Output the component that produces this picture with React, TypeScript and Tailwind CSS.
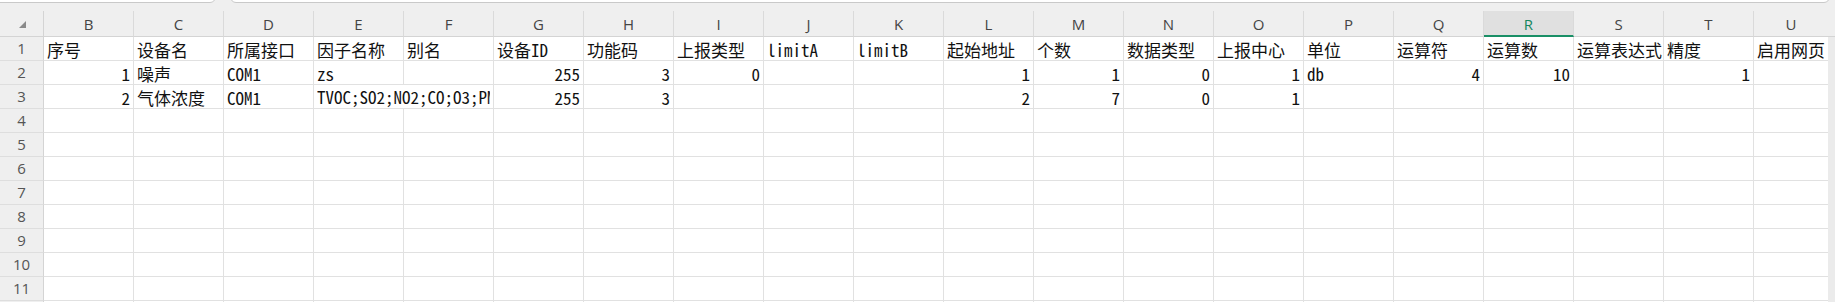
import React from "react";

type Val = string | number | null;

const COLS = ["B", "C", "D", "E", "F", "G", "H", "I", "J", "K", "L", "M", "N", "O", "P", "Q", "R", "S", "T", "U"];
const ACTIVE_COL = "R";

const ROWS: Val[][] = [
  ["序号", "设备名", "所属接口", "因子名称", "别名", "设备ID", "功能码", "上报类型", "limitA", "limitB", "起始地址", "个数", "数据类型", "上报中心", "单位", "运算符", "运算数", "运算表达式", "精度", "启用网页"],
  [1, "噪声", "COM1", "zs", null, 255, 3, 0, null, null, 1, 1, 0, 1, "db", 4, 10, null, 1, null],
  [2, "气体浓度", "COM1", "TVOC;SO2;NO2;CO;O3;PM2.5;PM10", null, 255, 3, null, null, null, 2, 7, 0, 1, null, null, null, null, null, null],
];

// cells whose text runs over the empty neighbour to the right: "row:col" -> span
const SPANS: Record<string, number> = { "2:3": 2 };

function Runs({ text }: { text: string }) {
  const parts = text.split(/([\x00-\x7f]+)/).filter((p) => p.length > 0);
  return (
    <>
      {parts.map((p, i) =>
        /^[\x00-\x7f]+$/.test(p) ? (
          <span key={i} className="font-['Noto_Sans_Mono_CJK_SC','Liberation_Mono',monospace]">
            {p}
          </span>
        ) : (
          <span key={i} className="font-['Noto_Sans_CJK_SC',sans-serif]">
            {p}
          </span>
        )
      )}
    </>
  );
}

function Cell({ v, span, last }: { v: Val; span: number; last: boolean }) {
  const width = last ? "w-[74px] border-r-0" : span === 2 ? "w-[180px] border-r" : "w-[90px] border-r";
  const align = typeof v === "number" ? "justify-end pr-[3px]" : "justify-start pl-[3px]";
  return (
    <div
      className={`${width} ${align} shrink-0 h-full flex items-center overflow-hidden whitespace-nowrap border-b border-[#e1e1e1] bg-white text-[17px] leading-[22px] text-[#111] pt-[2px]`}
    >
      {v === null ? null : span === 2 ? (
        <div className="w-[173px] overflow-hidden whitespace-nowrap">
          <Runs text={String(v)} />
        </div>
      ) : (
        <Runs text={String(v)} />
      )}
    </div>
  );
}

function RowHead({ n }: { n: number }) {
  return (
    <div className="w-[44px] shrink-0 h-full flex items-center justify-center border-r border-r-[#d4d4d4] border-b border-b-[#dedede] bg-[#efefef] text-[15px] text-[#555] font-['Open_Sans',sans-serif]">
      {n}
    </div>
  );
}

function DataRow({ n, cells }: { n: number; cells: Val[] }) {
  const out: React.ReactNode[] = [];
  for (let c = 0; c < COLS.length; c++) {
    const span = SPANS[`${n - 1}:${c}`] ?? 1;
    out.push(<Cell key={c} v={cells[c] ?? null} span={span} last={c === COLS.length - 1} />);
    c += span - 1;
  }
  return (
    <div className="flex h-[24px]">
      <RowHead n={n} />
      {out}
      <div className="w-[7px] shrink-0 h-full bg-[#ebebeb]" />
    </div>
  );
}

// top edge of the next row, scrolled almost out of view
function PeekRow() {
  return (
    <div className="flex h-[24px]">
      <div className="w-[44px] shrink-0 h-full border-r border-r-[#d4d4d4] bg-[#efefef]" />
      {COLS.map((c, i) => (
        <div
          key={c}
          className={`${i === COLS.length - 1 ? "w-[74px]" : "w-[90px] border-r border-[#e1e1e1]"} shrink-0 h-full bg-white`}
        />
      ))}
      <div className="w-[7px] shrink-0 h-full bg-[#ebebeb]" />
    </div>
  );
}

function ColumnHeader() {
  return (
    <div className="flex h-[26px]">
      <div className="w-[44px] shrink-0 h-full flex items-center justify-center border-r border-r-[#d4d4d4] border-b border-b-[#d4d4d4]">
        <svg width="7" height="7" viewBox="0 0 7 7" className="mt-[1px] ml-[1px]">
          <path d="M7 0 L7 7 L0 7 Z" fill="#8a8a8a" />
        </svg>
      </div>
      {COLS.map((c, i) => {
        const last = i === COLS.length - 1;
        const active = c === ACTIVE_COL;
        return (
          <div
            key={c}
            className={`${last ? "w-[74px] border-r-0" : "w-[90px] border-r border-r-[#dadada]"} ${
              active
                ? "bg-[#e0e0e0] text-[#15875f] border-b-2 border-b-[#1a8f66]"
                : "text-[#444] border-b border-b-[#d4d4d4]"
            } shrink-0 h-full flex items-center justify-center pt-[2px] text-[15px] font-['Open_Sans',sans-serif]`}
          >
            {c}
          </div>
        );
      })}
      <div className="w-[7px] shrink-0 h-full border-b border-b-[#d4d4d4]" />
    </div>
  );
}

function FormulaStrip() {
  return (
    <div className="h-[11px] overflow-hidden">
      <div className="flex gap-[14px] -mt-[20px] -ml-[10px]">
        <div className="w-[226px] h-[23px] shrink-0 rounded-[6px] border border-[#c9c9c9] bg-white" />
        <div className="w-[1600px] h-[23px] shrink-0 rounded-[6px] border border-[#c9c9c9] bg-white" />
      </div>
    </div>
  );
}

export default function App() {
  const rows: Val[][] = [];
  for (let i = 0; i < 11; i++) rows.push(ROWS[i] ?? []);
  return (
    <div className="w-[1835px] h-[302px] overflow-hidden bg-[#efefef]">
      <FormulaStrip />
      <ColumnHeader />
      {rows.map((r, i) => (
        <DataRow key={i} n={i + 1} cells={r} />
      ))}
      <PeekRow />
    </div>
  );
}
